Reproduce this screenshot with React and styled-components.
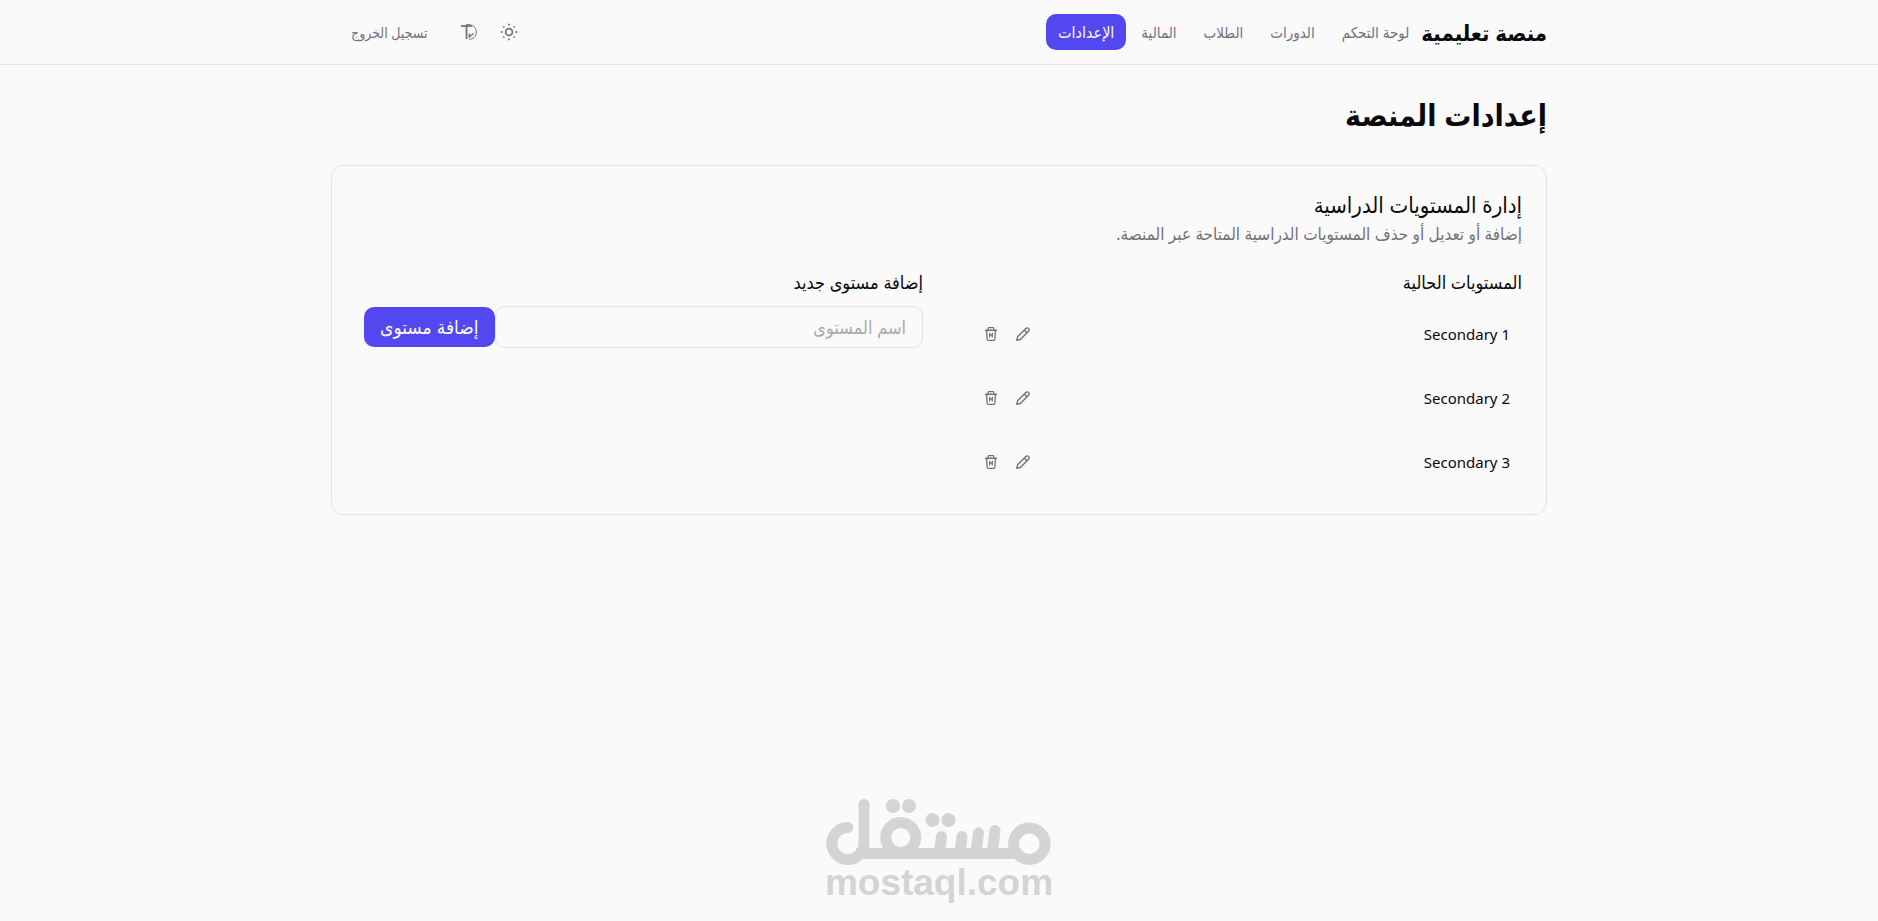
import React, { useState } from "react";
import styled, { createGlobalStyle } from "styled-components";

const GlobalStyle = createGlobalStyle`
  * {
    box-sizing: border-box;
  }

  body {
    margin: 0;
    background-color: #fafafa;
    color: #09090b;
    font-family: "Noto Sans", "DejaVu Sans Condensed", "DejaVu Sans", sans-serif;
    font-size: 16px;
    line-height: 24px;
  }

  button,
  input {
    font-family: inherit;
  }
`;

const Page = styled.div`
  display: flex;
  flex-direction: column;
  min-height: 100vh;
`;

const Header = styled.header`
  border-bottom: 1px solid #e4e4e7;
`;

const Container = styled.div`
  width: 100%;
  max-width: 1280px;
  margin: 0 auto;
  padding: 0 32px;
`;

const HeaderRow = styled(Container)`
  display: flex;
  align-items: center;
  justify-content: space-between;
  height: 64px;
`;

const HeaderGroup = styled.div`
  display: flex;
  align-items: center;
`;

const Brand = styled.a`
  color: inherit;
  font-size: 22px;
  font-weight: 700;
  text-decoration: none;
  white-space: nowrap;
`;

const Nav = styled.nav`
  display: flex;
  align-items: center;
  gap: 3px;
`;

const NavLink = styled.a`
  display: flex;
  align-items: center;
  height: 36px;
  padding: 0 12px;
  border-radius: 10px;
  background-color: ${({ $active }) => ($active ? "#5348f0" : "transparent")};
  color: ${({ $active }) => ($active ? "#fafafa" : "#71717a")};
  font-size: ${({ $active }) => ($active ? 16 : 15)}px;
  text-decoration: none;
  white-space: nowrap;
`;

const Actions = styled(HeaderGroup)`
  padding-left: 8px;
`;

const IconButton = styled.button`
  display: flex;
  align-items: center;
  justify-content: center;
  width: ${({ $size }) => $size}px;
  height: ${({ $size }) => $size}px;
  padding: 0;
  border: 0;
  border-radius: 10px;
  background: none;
  color: #71717a;
  cursor: pointer;
`;

const SignOut = styled.button`
  height: 36px;
  margin-right: 10px;
  padding: 0 12px;
  border: 0;
  background: none;
  color: #71717a;
  font-size: 14px;
  cursor: pointer;
`;

const Main = styled(Container)`
  flex: 1;
  padding-top: 32px;
`;

const Title = styled.h1`
  margin: 0 0 32px;
  font-size: 30px;
  font-weight: 700;
  line-height: 36px;
`;

const Card = styled.section`
  padding: 24px;
  border: 1px solid #e4e4e7;
  border-radius: 12px;
`;

const CardTitle = styled.h2`
  margin: 0 0 4px;
  font-size: 22px;
  font-weight: 400;
  line-height: 28px;
`;

const CardText = styled.p`
  margin: 0 0 24px;
  color: #71717a;
  font-size: 17px;
  line-height: 24px;
`;

const Columns = styled.div`
  display: grid;
  grid-template-columns: 1fr 1fr;
  gap: 32px;
`;

const ColumnTitle = styled.h3`
  margin: 0 0 12px;
  font-size: 18px;
  font-weight: 400;
  line-height: 24px;
`;

const LevelList = styled.ul`
  display: grid;
  gap: 8px;
  margin: 0;
  padding: 0;
  list-style: none;
`;

const LevelRow = styled.li`
  display: flex;
  align-items: center;
  justify-content: space-between;
  padding: 12px;
`;

const LevelName = styled.span`
  font-size: 15px;
`;

const LevelActions = styled.div`
  display: flex;
  padding-left: 8px;
`;

const AddForm = styled.form`
  display: flex;
  align-items: center;
  padding-left: 8px;
`;

const LevelInput = styled.input`
  flex: 1;
  min-width: 0;
  height: 42px;
  padding: 0 16px;
  border: 1px solid #e4e4e7;
  border-radius: 10px;
  background: none;
  color: inherit;
  font-size: 18px;

  &::placeholder {
    color: #a9a9a9;
    opacity: 1;
  }
`;

const AddButton = styled.button`
  height: 40px;
  padding: 0 16px;
  border: 0;
  border-radius: 10px;
  background-color: #5348f0;
  color: #fafafa;
  font-size: 19px;
  white-space: nowrap;
  cursor: pointer;
`;

const Footer = styled.footer`
  display: flex;
  justify-content: center;
  padding-bottom: 12px;
`;

const links = ["لوحة التحكم", "الدورات", "الطلاب", "المالية", "الإعدادات"];

const SunIcon = () => (
  <svg width="18" height="18" viewBox="0 0 18 18" fill="none" stroke="currentColor">
    <circle cx="9" cy="9" r="3.400" strokeWidth="1.700" />
    <path
      d="M9 .8V2.400M9 15.600V17.200M.8 9H2.400M15.600 9H17.200M3.300 3.300L4.300 4.300M13.700 13.700L14.700 14.700M3.300 14.700L4.300 13.700M13.700 4.300L14.700 3.300"
      strokeWidth="1.800"
    />
  </svg>
);

const ThemeIcon = () => (
  <svg width="16" height="16" viewBox="0 0 16 16" fill="none" stroke="currentColor">
    <path d="M0 2H11" strokeWidth="1.800" />
    <path d="M5.500 2V15" strokeWidth="1.800" />
    <path d="M5 .7C11 -.2 15.300 3.200 15.300 8S12 15.300 8 15.300" />
    <path d="M8.300 9.500V13L12.500 9.500" strokeWidth="1.500" />
  </svg>
);

const PencilIcon = () => (
  <svg
    width="16"
    height="16"
    viewBox="0 0 16 16"
    fill="none"
    stroke="currentColor"
    strokeWidth="1.400"
    strokeLinejoin="round"
  >
    <path d="M1.800 14.200L2.600 10.800L10.900 2.500A1.900 1.900 0 0 1 13.600 5.200L5.300 13.500Z" />
    <path d="M9.300 4.100L12 6.800" />
  </svg>
);

const TrashIcon = () => (
  <svg width="16" height="16" viewBox="0 0 16 16" fill="none" stroke="currentColor" strokeWidth="1.300">
    <path d="M2 4.300H14" strokeWidth="1.500" />
    <path d="M5.200 4V2.300Q5.200 1.600 5.900 1.600H10.100Q10.800 1.600 10.800 2.300V4" />
    <path d="M3.600 4.500L4.100 13.200Q4.200 14.300 5.300 14.300H10.700Q11.800 14.300 11.900 13.200L12.400 4.500" />
    <path d="M6.700 7V11.500M9.300 7V11.500M6.700 9.200H9.300" />
  </svg>
);

const MostaqlLogo = () => (
  <svg width="230" height="114" viewBox="0 0 230 114" role="img" aria-label="mostaql">
    <g fill="none" stroke="#d4d4d4" strokeWidth="11" strokeLinecap="round">
      <path d="M24 32.500A16 16 0 1 0 35 60Q40 56 40 48V9.500" />
      <path d="M32 58.500H197" strokeLinecap="butt" />
      <circle cx="76.700" cy="42.500" r="15" />
      <circle cx="205.300" cy="48.700" r="15.800" />
      <path d="M117.500 41.500L115.500 57M138 41.500L136 57M154.500 38L152 57M171 35.500L168.500 57" />
    </g>
    <g fill="#d4d4d4">
      <circle cx="69" cy="11" r="7" />
      <circle cx="85" cy="11" r="7" />
      <circle cx="108.500" cy="25" r="7" />
      <circle cx="124.500" cy="25" r="7" />
    </g>
    <text
      x="115"
      y="100"
      textAnchor="middle"
      fill="#d4d4d4"
      fontFamily="Liberation Sans, sans-serif"
      fontSize="37"
      fontWeight="700"
      direction="ltr"
    >
      mostaql.com
    </text>
  </svg>
);

const App = () => {
  const [levels, setLevels] = useState(["Secondary 1", "Secondary 2", "Secondary 3"]);
  const [name, setName] = useState("");

  const addLevel = (e) => {
    e.preventDefault();
    if (!name.trim()) return;
    setLevels([...levels, name.trim()]);
    setName("");
  };

  const removeLevel = (level) => {
    setLevels(levels.filter((item) => item !== level));
  };

  return (
    <Page dir="rtl" lang="ar">
      <GlobalStyle />
      <Header>
        <HeaderRow>
          <HeaderGroup>
            <Brand href="#">منصة تعليمية</Brand>
            <Nav>
              {links.map((link, index) => (
                <NavLink href="#" key={link} $active={index === 4}>
                  {link}
                </NavLink>
              ))}
            </Nav>
          </HeaderGroup>
          <Actions>
            <IconButton $size={40} aria-label="الوضع الفاتح">
              <SunIcon />
            </IconButton>
            <IconButton $size={40} aria-label="السمة">
              <ThemeIcon />
            </IconButton>
            <SignOut>تسجيل الخروج</SignOut>
          </Actions>
        </HeaderRow>
      </Header>
      <Main as="main">
        <Title>إعدادات المنصة</Title>
        <Card>
          <CardTitle>إدارة المستويات الدراسية</CardTitle>
          <CardText>إضافة أو تعديل أو حذف المستويات الدراسية المتاحة عبر المنصة.</CardText>
          <Columns>
            <div>
              <ColumnTitle>المستويات الحالية</ColumnTitle>
              <LevelList>
                {levels.map((level) => (
                  <LevelRow key={level}>
                    <LevelName>{level}</LevelName>
                    <LevelActions>
                      <IconButton $size={32} aria-label={`تعديل ${level}`}>
                        <PencilIcon />
                      </IconButton>
                      <IconButton
                        $size={32}
                        aria-label={`حذف ${level}`}
                        onClick={() => removeLevel(level)}
                      >
                        <TrashIcon />
                      </IconButton>
                    </LevelActions>
                  </LevelRow>
                ))}
              </LevelList>
            </div>
            <div>
              <ColumnTitle>إضافة مستوى جديد</ColumnTitle>
              <AddForm onSubmit={addLevel}>
                <LevelInput
                  aria-label="اسم المستوى"
                  placeholder="اسم المستوى"
                  value={name}
                  onChange={(e) => setName(e.target.value)}
                />
                <AddButton type="submit">إضافة مستوى</AddButton>
              </AddForm>
            </div>
          </Columns>
        </Card>
      </Main>
      <Footer>
        <MostaqlLogo />
      </Footer>
    </Page>
  );
};

export default App;
